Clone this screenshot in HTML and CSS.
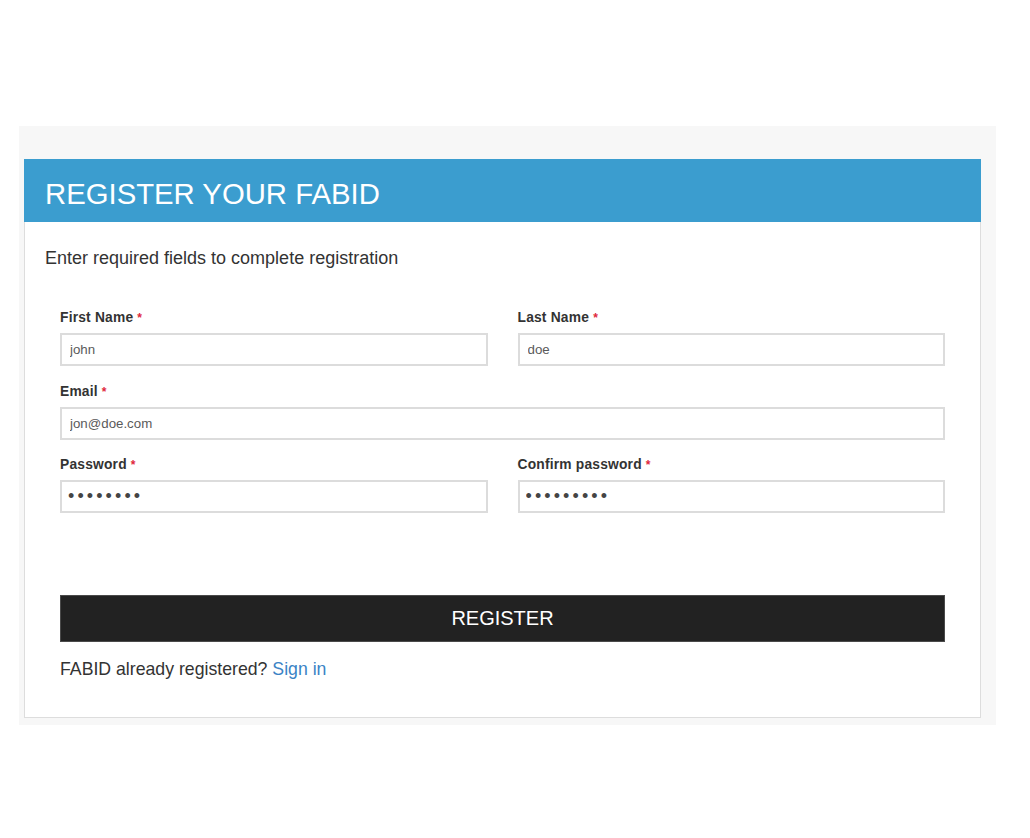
FILE: index.html
```html
<!DOCTYPE html>
<html lang="en">
<head>
<meta charset="utf-8">
<title>Register your FABID</title>
<link rel="stylesheet" href="styles.css">
</head>
<body>
<div class="stage">
  <div class="card">
    <div class="card-header">
      <h1 class="title">REGISTER YOUR FABID</h1>
    </div>
    <div class="card-body">
      <p class="intro">Enter required fields to complete registration</p>
      <form class="form">
        <div class="grid">
          <div class="field">
            <label class="label">First Name <span class="req">*</span></label>
            <input class="input" type="text" value="john">
          </div>
          <div class="field">
            <label class="label">Last Name <span class="req">*</span></label>
            <input class="input" type="text" value="doe">
          </div>
          <div class="field span2">
            <label class="label">Email <span class="req">*</span></label>
            <input class="input" type="text" value="jon@doe.com">
          </div>
          <div class="field">
            <label class="label">Password <span class="req">*</span></label>
            <input class="input pw" type="password" value="12345678">
          </div>
          <div class="field">
            <label class="label">Confirm password <span class="req">*</span></label>
            <input class="input pw" type="password" value="123456789">
          </div>
        </div>
        <button type="button" class="btn">REGISTER</button>
        <p class="footer">FABID already registered? <a class="link" href="#">Sign in</a></p>
      </form>
    </div>
  </div>
</div>
</body>
</html>
```

FILE: styles.css
```css
html, body {
  margin: 0;
  padding: 0;
  background: #ffffff;
}

body {
  font-family: "Liberation Sans", Arial, sans-serif;
  color: #333333;
}

.stage {
  margin: 126px 34px 0 19px;
  padding: 33px 15px 7px 5px;
  background: #f7f7f7;
}

.card {
  background: #ffffff;
  border: 1px solid #dddddd;
  border-top: none;
}

.card-header {
  background: #3b9dcf;
  height: 63px;
  box-sizing: border-box;
  padding: 18px 20px 0 20px;
  margin: 0 -1px;
}

.title {
  margin: 0 0 0 1px;
  font-size: 29.3px;
  line-height: 34px;
  font-weight: normal;
  color: #ffffff;
}

.card-body {
  padding: 25px 20px 37px 20px;
}

.intro {
  margin: 0;
  font-size: 18px;
  line-height: 22px;
  color: #333333;
}

.form {
  margin-top: 41px;
  padding: 0 15px;
}

.grid {
  display: grid;
  grid-template-columns: 1fr 1fr;
  column-gap: 30px;
  row-gap: 17.5px;
}

.span2 {
  grid-column: 1 / span 2;
}

.field {
  display: flex;
  flex-direction: column;
  gap: 7px;
}

.label {
  font-size: 13.8px;
  line-height: 16px;
  font-weight: bold;
  color: #333333;
  letter-spacing: 0.2px;
}

.req {
  color: #e0283c;
  font-size: 12px;
}

.input {
  height: 33px;
  box-sizing: border-box;
  border: 2px solid #dcdcdc;
  padding: 0 8px;
  font-family: "Liberation Sans", Arial, sans-serif;
  font-size: 13.3px;
  color: #5a5a5a;
  background: #ffffff;
  outline: none;
}

.input.pw {
  font-size: 18px;
  letter-spacing: 3.1px;
  color: #444444;
  padding-left: 6px;
}

.btn {
  display: block;
  width: 100%;
  margin-top: 82px;
  height: 47px;
  background: #222222;
  border: 1px solid #4a4a4a;
  color: #ffffff;
  font-family: "Liberation Sans", Arial, sans-serif;
  font-size: 20px;
  cursor: pointer;
}

.footer {
  margin: 16px 0 0 0;
  font-size: 17.7px;
  line-height: 22px;
  color: #333333;
}

.link {
  color: #3a83c5;
  text-decoration: none;
}
```
